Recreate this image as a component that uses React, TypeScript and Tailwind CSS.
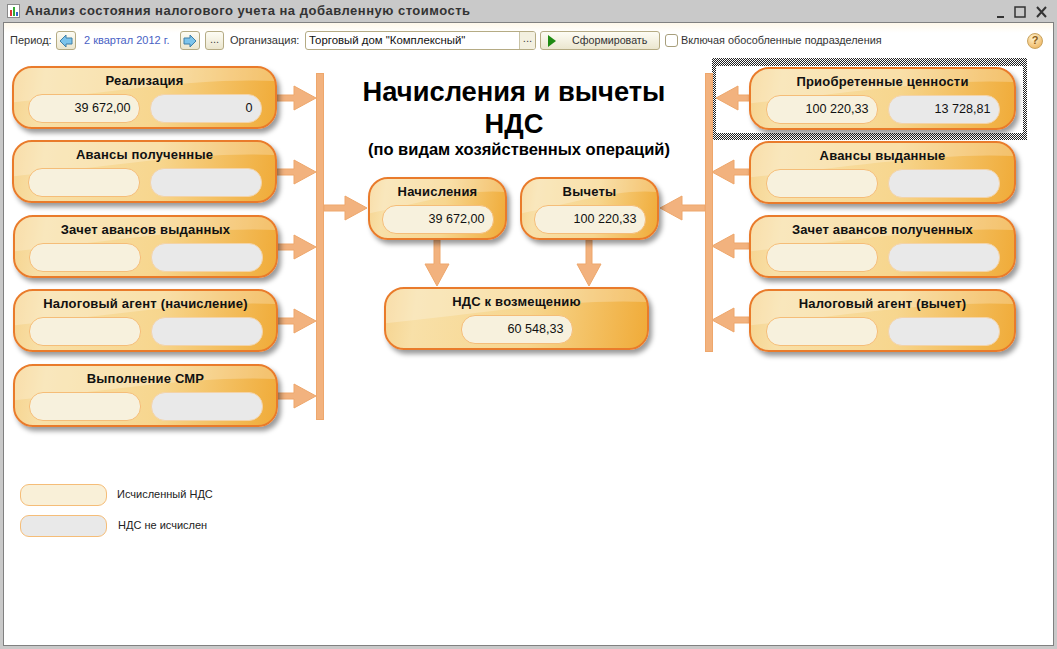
import React from 'react'

// page coordinates, canvas starts at x=4 y=56
const OX = 4
const OY = 56

const leftCards = [
  { title: 'Реализация', x: 12, y: 66, a: '39 672,00', b: '0' },
  { title: 'Авансы полученные', x: 12, y: 140, a: '', b: '' },
  { title: 'Зачет авансов выданных', x: 13, y: 215, a: '', b: '' },
  { title: 'Налоговый агент (начисление)', x: 13, y: 289, a: '', b: '' },
  { title: 'Выполнение СМР', x: 13, y: 364, a: '', b: '' },
]

const rightCards = [
  { title: 'Приобретенные ценности', x: 749, y: 67, a: '100 220,33', b: '13 728,81' },
  { title: 'Авансы выданные', x: 749, y: 141, a: '', b: '' },
  { title: 'Зачет авансов полученных', x: 749, y: 215, a: '', b: '' },
  { title: 'Налоговый агент (вычет)', x: 749, y: 289, a: '', b: '' },
]

const Pill = ({ value, grey }: { value?: string; grey?: boolean }) => (
  <div
    className={`flex h-[29px] w-[112px] items-center justify-end rounded-[14px] border pr-[8px] text-[12.6px] leading-none text-[#111] ${
      grey ? 'border-[#f3d3a8] bg-[#e9e9e9]' : 'border-[#f5bd78] bg-[#f7f1dd]'
    }`}
  >
    {value}
  </div>
)

const Card = ({ title, x, y, w, children }: { title: string; x: number; y: number; w: number; children: React.ReactNode }) => (
  <div
    className="absolute h-[63px] rounded-[20px] shadow-[3px_4px_5px_rgba(0,0,0,0.4)]"
    style={{ left: x - OX, top: y - OY, width: w }}
  >
    <div className="relative flex h-full flex-col items-center overflow-hidden rounded-[20px] border-2 border-[#e97b2b] bg-[linear-gradient(98deg,#f6d490_0%,#f8e0a8_12%,#f7d68e_55%,#f0ab38_100%)]">
      <svg className="absolute inset-0 h-full w-full" viewBox="0 0 100 100" preserveAspectRatio="none">
        <path d="M0 0H100V22C70 16 35 42 0 58Z" fill="#fff" fillOpacity="0.24" />
      </svg>
      <div className="relative mt-[3px] text-[13px] font-bold leading-[20px] tracking-[0.2px] text-[#111]">{title}</div>
      <div className="relative mt-[3px] flex gap-[10px]">{children}</div>
    </div>
  </div>
)

const ArrowShape = ({ pts }: { pts: string }) => (
  <polygon points={pts} fill="#f2b27e" stroke="#eea76c" strokeWidth="1" />
)

const right = (x1: number, x2: number, y: number) =>
  `${x1},${y - 3} ${x2 - 22},${y - 3} ${x2 - 22},${y - 12} ${x2},${y} ${x2 - 22},${y + 12} ${x2 - 22},${y + 3} ${x1},${y + 3}`
const left = (x1: number, x2: number, y: number) =>
  `${x1},${y - 3} ${x2 + 22},${y - 3} ${x2 + 22},${y - 12} ${x2},${y} ${x2 + 22},${y + 12} ${x2 + 22},${y + 3} ${x1},${y + 3}`
const down = (x: number, y1: number, y2: number) =>
  `${x - 3},${y1} ${x - 3},${y2 - 22} ${x - 12},${y2 - 22} ${x},${y2} ${x + 12},${y2 - 22} ${x + 3},${y2 - 22} ${x + 3},${y1}`

const Connectors = () => (
  <svg className="absolute left-0 top-0" width="1049" height="589" viewBox={`${OX} ${OY} 1049 589`}>
    <rect x="316.5" y="73.5" width="7" height="346" fill="#f2b27e" stroke="#eea76c" />
    <rect x="705.5" y="73.5" width="7" height="278" fill="#f2b27e" stroke="#eea76c" />
    {[98, 172, 247, 321, 396].map((y) => (
      <ArrowShape key={y} pts={right(277, 316, y)} />
    ))}
    {[98, 172, 246, 320].map((y, i) => (
      <ArrowShape key={y} pts={left(749, i === 0 ? 716 : 712, y)} />
    ))}
    <ArrowShape pts={right(324, 367, 208)} />
    <ArrowShape pts={left(705, 660, 208)} />
    <ArrowShape pts={down(437, 240, 286)} />
    <ArrowShape pts={down(589, 240, 286)} />
  </svg>
)

const NavButton = ({ dir }: { dir: 'left' | 'right' }) => (
  <div className="flex h-[19px] w-[20px] items-center justify-center rounded-[3px] border border-[#b5ab84] bg-[linear-gradient(#fdfcf4,#ebe6cf)]">
    <svg width="14" height="14" viewBox="0 0 14 14" className={dir === 'right' ? 'rotate-180' : ''}>
      <path d="M1 7L7 1V4H13V10H7V13Z" fill="#7cc4ec" stroke="#3f7fa8" strokeWidth="1" />
    </svg>
  </div>
)

const DotsButton = () => (
  <div className="flex h-[19px] w-[19px] items-center justify-center rounded-[3px] border border-[#b5ab84] bg-[linear-gradient(#fdfcf4,#ebe6cf)] pb-[3px] text-[11px] text-[#444]">
    ...
  </div>
)

const App = () => (
  <div className="flex h-[649px] w-[1057px] flex-col overflow-hidden bg-[#c9c9c9] px-[3px] pb-[3px] font-['Liberation_Sans',sans-serif]">
    {/* title bar */}
    <div className="flex h-[22px] shrink-0 items-center pl-[4px] pr-[5px]">
      <svg width="13" height="14" viewBox="0 0 13 14">
        <rect x="0.5" y="0.5" width="12" height="13" fill="#fff" stroke="#8a8a8a" />
        <rect x="3" y="6" width="2" height="6" fill="#d33" />
        <rect x="6" y="3" width="2" height="9" fill="#3a3" />
        <rect x="9" y="8" width="2" height="4" fill="#36c" />
      </svg>
      <span className="ml-[5px] text-[13px] font-bold tracking-[0.5px] text-[#333]">
        Анализ состояния налогового учета на добавленную стоимость
      </span>
      <div className="ml-auto flex items-center gap-[8px]">
        <svg width="14" height="14" viewBox="0 0 14 14"><rect x="6" y="12" width="7" height="2" fill="#333" /></svg>
        <svg width="14" height="14" viewBox="0 0 14 14"><rect x="2" y="3" width="10" height="10" fill="none" stroke="#333" strokeWidth="1.5" /></svg>
        <svg width="14" height="14" viewBox="0 0 14 14"><path d="M2 3L11 13M11 3L2 13" stroke="#333" strokeWidth="2" /></svg>
      </div>
    </div>

    <div className="flex min-h-0 flex-1 flex-col border border-[#808080] bg-white">
      {/* toolbar */}
      <div className="flex h-[33px] shrink-0 items-center bg-[linear-gradient(#fff8ea,#ffffff_30%)] pl-[6px] pt-[2px] text-[11px] text-[#333]">
        <span className="w-[46px] pb-[1px]">Период:</span>
        <NavButton dir="left" />
        <span className="ml-[8px] w-[96px] pb-[1px] text-[#4a62c4]">2 квартал 2012 г.</span>
        <NavButton dir="right" />
        <div className="ml-[5px]"><DotsButton /></div>
        <span className="ml-[6px] w-[75px] pb-[1px]">Организация:</span>
        <div className="flex h-[19px] w-[231px] items-center overflow-hidden rounded-[3px] border border-[#b5ab84] bg-white pl-[3px] text-[11.4px] text-[#111]">
          <span>Торговый дом "Комплексный"</span>
          <div className="ml-auto flex h-full w-[16px] items-center justify-center border-l border-[#c9c3a6] bg-[#f3f0e0] pb-[3px] text-[#444]">...</div>
        </div>
        <div className="ml-[4px] flex h-[19px] w-[120px] items-center rounded-[3px] border border-[#b5ab84] bg-[linear-gradient(#fdfcf4,#ebe6cf)] pl-[7px]">
          <svg width="8" height="12" viewBox="0 0 8 12"><path d="M0 0L8 6L0 12Z" fill="#1f8a12" /></svg>
          <span className="ml-[16px] text-[10.7px]">Сформировать</span>
        </div>
        <div className="ml-[5px] h-[13px] w-[13px] rounded-[3px] border border-[#a89f7c] bg-white" />
        <span className="ml-[3px] text-[10.85px]">Включая обособленные подразделения</span>
        <div className="ml-auto mr-[10px] flex h-[16px] w-[16px] items-center justify-center rounded-full border border-[#c9a35e] bg-[radial-gradient(circle_at_40%_30%,#fff3cf,#eba94a)] text-[11px] font-bold text-[#8a5a14]">
          ?
        </div>
      </div>

      {/* diagram */}
      <div className="relative flex-1">
        <div className="absolute left-[708px] top-[2px] h-[82px] w-[315px] bg-[repeating-conic-gradient(#222_0_25%,#fff_0_50%)] bg-[length:2px_2px] px-[4px] pb-[7px] pt-[8px]">
          <div className="h-full w-full bg-white" />
        </div>

        <Connectors />

        {leftCards.map((c) => (
          <Card key={c.title} title={c.title} x={c.x} y={c.y} w={265}>
            <Pill value={c.a} />
            <Pill value={c.b} grey />
          </Card>
        ))}
        {rightCards.map((c) => (
          <Card key={c.title} title={c.title} x={c.x} y={c.y} w={267}>
            <Pill value={c.a} />
            <Pill value={c.b} grey />
          </Card>
        ))}
        <Card title="Начисления" x={368} y={177} w={139}>
          <Pill value="39 672,00" />
        </Card>
        <Card title="Вычеты" x={520} y={177} w={139}>
          <Pill value="100 220,33" />
        </Card>
        <Card title="НДС к возмещению" x={384} y={287} w={265}>
          <Pill value="60 548,33" />
        </Card>

        <div className="absolute left-[350px] top-[20px] w-[320px] text-center font-bold text-black">
          <div className="text-[27.3px] leading-[32px]">Начисления и вычеты</div>
          <div className="text-[27.3px] leading-[32px]">НДС</div>
          <div className="ml-[10px] whitespace-nowrap text-[16.5px] leading-[18px]">(по видам хозяйственных операций)</div>
        </div>

        {/* legend */}
        <div className="absolute left-[16px] top-[428px] flex flex-col gap-[9px] text-[11px] text-[#222]">
          <div className="flex items-center gap-[10px]">
            <div className="h-[22px] w-[87px] rounded-[9px] border border-[#f5bd78] bg-[#f9f0d8]" />
            <span className="pb-[2px]">Исчисленный НДС</span>
          </div>
          <div className="flex items-center gap-[11px]">
            <div className="h-[22px] w-[87px] rounded-[9px] border border-[#f5bd78] bg-[#e9e9e9]" />
            <span className="pb-[2px]">НДС не исчислен</span>
          </div>
        </div>
      </div>
    </div>
  </div>
)

export default App
